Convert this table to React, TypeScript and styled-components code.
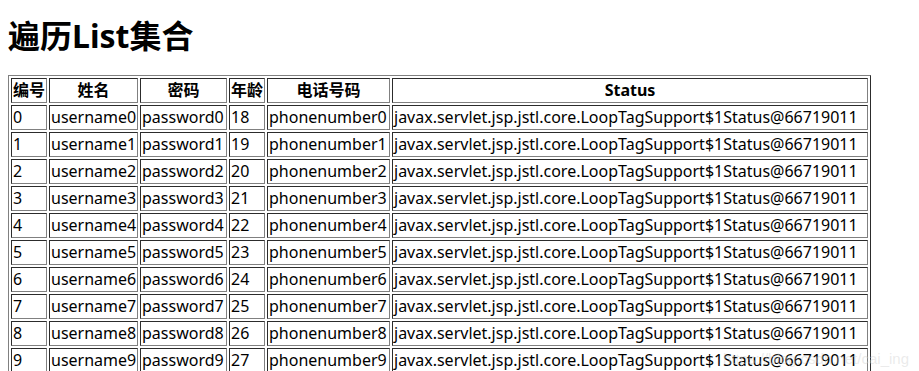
import React from 'react';
import styled, { createGlobalStyle } from 'styled-components';

interface User {
    id: number;
    username: string;
    password: string;
    age: number;
    phone: string;
}

const users: User[] = Array.from({ length: 10 }, (_, i) => ({
    id: i,
    username: `username${i}`,
    password: `password${i}`,
    age: 18 + i,
    phone: `phonenumber${i}`,
}));

const statusText = 'javax.servlet.jsp.jstl.core.LoopTagSupport$1Status@66719011';

// widths taken from the rendered cells (border box)
const columns = [
    { title: '编号', width: 36 },
    { title: '姓名', width: 89 },
    { title: '密码', width: 87 },
    { title: '年龄', width: 36 },
    { title: '电话号码', width: 123 },
    { title: 'Status', width: 476 },
];

const App = () => {
    return (
        <Page>
            <GlobalStyle />
            <Title>遍历List集合</Title>
            <Table>
                <colgroup>
                    {columns.map((c) => (
                        <col key={c.title} style={{ width: c.width }} />
                    ))}
                </colgroup>
                <thead>
                    <tr>
                        {columns.map((c) => (
                            <Th key={c.title}>{c.title}</Th>
                        ))}
                    </tr>
                </thead>
                <tbody>
                    {users.map((u) => (
                        <tr key={u.id}>
                            <Td>{u.id}</Td>
                            <Td>{u.username}</Td>
                            <Td>{u.password}</Td>
                            <Td>{u.age}</Td>
                            <Td>{u.phone}</Td>
                            <Td>{statusText}</Td>
                        </tr>
                    ))}
                </tbody>
            </Table>
            <Watermark>https://blog.csdn.net/cai_ing</Watermark>
        </Page>
    );
};

export default App;

const GlobalStyle = createGlobalStyle`
    html, body {
        margin: 0;
        padding: 0;
        background: #fff;
        overflow: hidden;
    }
    body {
        font-family: "Noto Sans", "Noto Sans CJK SC", sans-serif;
        color: #000;
    }
`;

const Page = styled.div`
    position: relative;
    padding: 0 8px;
    height: 371px;
    overflow: hidden;
`;

const Title = styled.h1`
    margin: 0;
    padding-top: 15px;
    padding-bottom: 18px;
    font-size: 32px;
    line-height: 42px;
    font-weight: bold;
    font-family: "Noto Sans", "Noto Sans CJK SC", sans-serif;
`;

const Table = styled.table`
    width: 863px;
    border: 1px outset grey;
    border-spacing: 2px;
    table-layout: fixed;
    font-size: 16px;
`;

const Th = styled.th`
    border: 1px inset grey;
    padding: 1px;
    font-weight: bold;
    text-align: center;
    line-height: 21px;
    white-space: nowrap;
    overflow: hidden;
`;

const Td = styled.td`
    border: 1px inset grey;
    padding: 1px;
    line-height: 21px;
    white-space: nowrap;
    overflow: hidden;
`;

const Watermark = styled.div`
    position: absolute;
    right: 10px;
    bottom: 4px;
    font-size: 15px;
    color: rgba(210, 210, 210, 0.45);
    font-family: "Liberation Sans", sans-serif;
    pointer-events: none;
`;
